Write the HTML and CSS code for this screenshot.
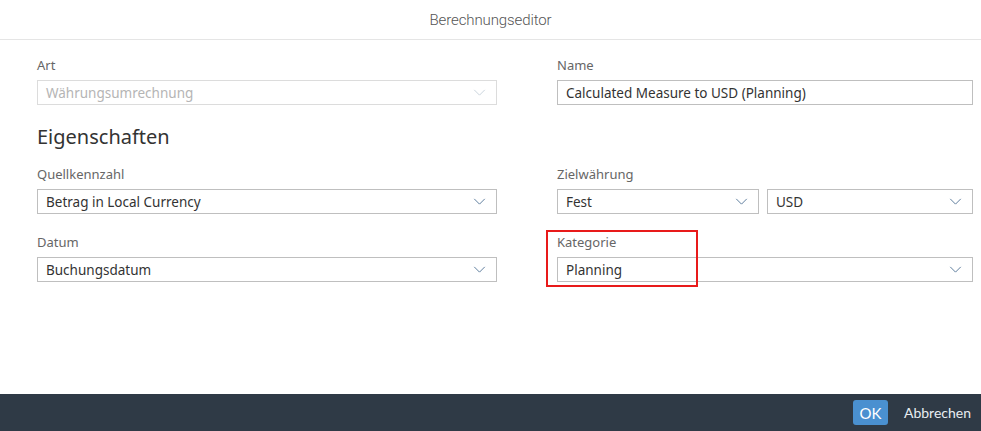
FILE: index.html
```html
<!DOCTYPE html>
<html lang="de">
<head>
<meta charset="utf-8">
<title>Berechnungseditor</title>
<link rel="stylesheet" href="styles.css">
</head>
<body>
<div class="dialog">
  <header class="header"><span class="title">Berechnungseditor</span></header>
  <main class="content">
    <div class="row">
      <div class="field">
        <label class="label">Art</label>
        <div class="input disabled"><span>Währungsumrechnung</span><svg class="chev" viewBox="0 0 14 8"><path d="M1 1l6 6 6-6" /></svg></div>
      </div>
      <div class="field">
        <label class="label">Name</label>
        <div class="input"><span>Calculated Measure to USD (Planning)</span></div>
      </div>
    </div>
    <h2 class="section">Eigenschaften</h2>
    <div class="row">
      <div class="field">
        <label class="label">Quellkennzahl</label>
        <div class="input"><span>Betrag in Local Currency</span><svg class="chev" viewBox="0 0 14 8"><path d="M1 1l6 6 6-6" /></svg></div>
      </div>
      <div class="field">
        <label class="label">Zielwährung</label>
        <div class="pair">
          <div class="input"><span>Fest</span><svg class="chev" viewBox="0 0 14 8"><path d="M1 1l6 6 6-6" /></svg></div>
          <div class="input"><span>USD</span><svg class="chev" viewBox="0 0 14 8"><path d="M1 1l6 6 6-6" /></svg></div>
        </div>
      </div>
    </div>
    <div class="row row-gap">
      <div class="field">
        <label class="label">Datum</label>
        <div class="input"><span>Buchungsdatum</span><svg class="chev" viewBox="0 0 14 8"><path d="M1 1l6 6 6-6" /></svg></div>
      </div>
      <div class="field highlight">
        <label class="label">Kategorie</label>
        <div class="input"><span>Planning</span><svg class="chev" viewBox="0 0 14 8"><path d="M1 1l6 6 6-6" /></svg></div>
        <div class="redbox"></div>
      </div>
    </div>
  </main>
  <footer class="footer">
    <button class="btn ok">OK</button>
    <button class="btn cancel">Abbrechen</button>
  </footer>
</div>
</body>
</html>
```
FILE: styles.css
```css
* { box-sizing: border-box; }
html, body { margin: 0; padding: 0; height: 100%; }
body {
  font-family: "Noto Sans", "Liberation Sans", sans-serif;
  color: #333;
  background: #fff;
}
.dialog {
  height: 100vh;
  display: flex;
  flex-direction: column;
}
.header {
  height: 40px;
  border-bottom: 1px solid #e5e5e5;
  display: flex;
  align-items: center;
  justify-content: center;
}
.title {
  font-family: "Roboto", sans-serif;
  font-weight: 300;
  font-size: 15px;
  color: #555;
  letter-spacing: -0.1px;
}
.content {
  flex: 1;
  padding: 16px 8px 0 37px;
}
.row {
  display: grid;
  grid-template-columns: 460px 416px;
  column-gap: 60px;
}
.row-gap { margin-top: 19px; }
.field { position: relative; }
.label {
  display: block;
  font-size: 13px;
  color: #666;
  height: 24px;
  line-height: 18px;
}
.input {
  height: 25px;
  border: 1px solid #bfbfbf;
  background: #fff;
  display: flex;
  align-items: center;
  justify-content: space-between;
  padding: 0 10px 0 8px;
  font-size: 13.5px;
  color: #333;
}
.input.disabled {
  border-color: #dcdcdc;
  color: #b5b5b5;
}
.chev {
  width: 13px;
  height: 7px;
  fill: none;
  stroke: #5a7a9a;
  stroke-width: 1.1;
}
.disabled .chev { stroke: #c8d2dc; }
.pair {
  display: grid;
  grid-template-columns: 202px 206px;
  column-gap: 8px;
}
.section {
  font-size: 20px;
  font-weight: 400;
  color: #333;
  margin: 0;
  height: 60px;
  padding-top: 18px;
  line-height: 28px;
}
.redbox {
  position: absolute;
  left: -11px;
  top: -3px;
  width: 152px;
  height: 57px;
  border: 2px solid #e81a1a;
  pointer-events: none;
}
.footer {
  height: 37px;
  background: #2f3a46;
  display: flex;
  align-items: center;
  justify-content: flex-end;
  padding-right: 10px;
}
.btn {
  font-family: "Lato", sans-serif;
  font-size: 14px;
  border: none;
  background: transparent;
  color: #e8edf2;
  cursor: pointer;
}
.ok {
  background: #4a90d0;
  color: #fff;
  height: 25px;
  width: 35px;
  border-radius: 3px;
  padding: 0;
  font-size: 15px;
  margin-right: 16px;
}
.cancel {
  padding: 0;
  font-size: 14px;
}
```
